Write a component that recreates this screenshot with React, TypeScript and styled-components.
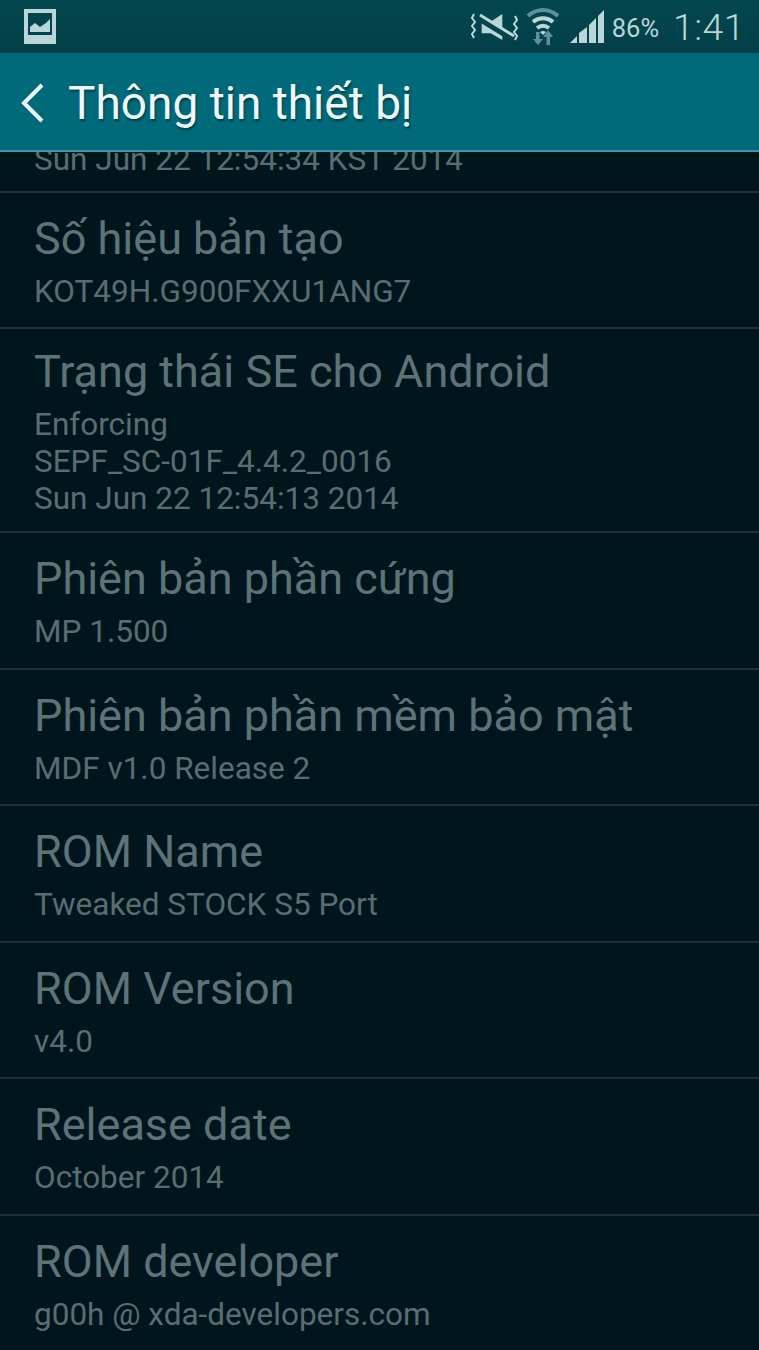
import React from 'react';
import styled, { createGlobalStyle } from 'styled-components';

const GlobalStyle = createGlobalStyle`
    html, body {
        margin: 0;
        padding: 0;
        background: #01161c;
    }
`;

const Screen = styled.div`
    width: 759px;
    height: 1350px;
    overflow: hidden;
    display: flex;
    flex-direction: column;
    background: #01161c;
    font-family: Roboto, "Noto Sans", sans-serif;
`;

const StatusBar = styled.div`
    height: 53px;
    flex: none;
    display: flex;
    align-items: center;
    box-sizing: border-box;
    padding: 0 14px 0 24px;
    background: linear-gradient(#04474f, #033f49);
    color: #b9d6d8;
`;

const StatusIcons = styled.div`
    margin-left: auto;
    display: flex;
    align-items: center;
`;

const WifiSlot = styled.span`
    display: flex;
    margin: 0 10px 0 6px;
`;

const Battery = styled.span`
    font-size: 25.5px;
    margin: 3px 14px 0 8px;
`;

const Clock = styled.span`
    font-size: 37.5px;
    font-weight: 300;
    letter-spacing: 0.4px;
`;

const Header = styled.div`
    height: 99px;
    flex: none;
    display: flex;
    align-items: center;
    padding: 3px 0 0 20px;
    box-sizing: border-box;
    background: #006a7a;
    border-bottom: 2px solid #3f97a3;
`;

const HeaderTitle = styled.h1`
    margin: 0 0 0 23px;
    font-size: 46px;
    font-weight: 400;
    color: #eef8f8;
    text-shadow: 1px 2px 2px rgba(0, 30, 40, 0.6);
`;

const List = styled.div`
    flex: 1;
    display: flex;
    flex-direction: column;
`;

const ClippedRow = styled.div`
    height: 40.5px;
    flex: none;
    box-sizing: border-box;
    overflow: hidden;
    display: flex;
    flex-direction: column;
    justify-content: flex-end;
    padding: 0 34px 13px;
    border-bottom: 2px solid #17323b;
`;

const Row = styled.div`
    flex: none;
    min-height: 136.5px;
    box-sizing: border-box;
    display: flex;
    flex-direction: column;
    justify-content: center;
    padding: 17px 34px 14px;
    border-bottom: 2px solid #17323b;
`;

const Title = styled.div`
    font-size: 45px;
    line-height: 52px;
    color: #5c7478;
`;

const Value = styled.div`
    font-size: 31.5px;
    line-height: 37px;
    color: #586e72;
    margin-top: 8px;
`;

const GalleryIcon = () => (
    <svg width="32" height="35" viewBox="0 0 32 35">
        <path fill="#b9d6d8" fillRule="evenodd" d="M0 0h32v35H0zM4 4v22h24V4z" />
        <path fill="#b9d6d8" d="M6 23v-5l5-4 5 4 6-4 4-4v13z" />
    </svg>
);

const MuteIcon = () => (
    <svg width="50" height="30" viewBox="0 0 50 30" fill="none" stroke="#b9d6d8">
        <path fill="#b9d6d8" stroke="none" d="M11.700 9.700h9L32.300 2v26l-11.600-6.700h-9z" />
        <path stroke="#04454d" strokeWidth="6" d="M10 7l34 21" />
        <path strokeWidth="3" d="M10 3l34 21" />
        <path strokeWidth="2" d="M4 2L2 6l3 4-3 4 3 4-3 4 2 4" />
        <path strokeWidth="2" d="M45 4l2 4-3 4 3 4-3 4 3 4-2 4" />
    </svg>
);

const WifiIcon = () => (
    <svg width="34" height="38" viewBox="0 0 34 38" fill="none">
        <path stroke="#5f9298" strokeWidth="4" d="M2 8c9-8 21-8 30 0" />
        <path stroke="#b9d6d8" strokeWidth="4" d="M7 14c6-5 14-5 20 0" />
        <path stroke="#b9d6d8" strokeWidth="4" d="M11 20c4-3 8-3 12 0" />
        <path fill="#b9d6d8" d="M14 24c2-1.500 4-1.500 6 0l-3 3z" />
        <path fill="#5f9298" d="M10 24h3.500v7H17l-5 6-5-6h3z" />
        <path fill="#5f9298" d="M24 37h-3.500v-8H17l5-7 5 7h-3z" />
    </svg>
);

const SignalIcon = () => (
    <svg width="34" height="33" viewBox="0 0 34 33" fill="#b9d6d8">
        <path d="M0 33l7-7v7z" />
        <path d="M9 33v-10l8-6v16z" />
        <path d="M19 33V15l7-7v25z" />
        <path d="M28 33V6l6-6v33z" />
    </svg>
);

const BackIcon = () => (
    <svg width="25" height="40" viewBox="0 0 25 40" fill="none">
        <path stroke="#eef8f8" strokeWidth="4" d="M22 2L4 20l18 18" />
    </svg>
);

const rows = [
    { title: 'Số hiệu bản tạo', values: ['KOT49H.G900FXXU1ANG7'] },
    {
        title: 'Trạng thái SE cho Android',
        values: ['Enforcing', 'SEPF_SC-01F_4.4.2_0016', 'Sun Jun 22 12:54:13 2014'],
    },
    { title: 'Phiên bản phần cứng', values: ['MP 1.500'] },
    { title: 'Phiên bản phần mềm bảo mật', values: ['MDF v1.0 Release 2'] },
    { title: 'ROM Name', values: ['Tweaked STOCK S5 Port'] },
    { title: 'ROM Version', values: ['v4.0'] },
    { title: 'Release date', values: ['October 2014'] },
    { title: 'ROM developer', values: ['g00h @ xda-developers.com'] },
];

export default function App() {
    const rowList = rows.map((row) => {
        return (
            <Row key={row.title}>
                <Title>{row.title}</Title>
                <Value>
                    {row.values.map((value) => (
                        <div key={value}>{value}</div>
                    ))}
                </Value>
            </Row>
        );
    });

    return (
        <Screen>
            <GlobalStyle />
            <StatusBar>
                <GalleryIcon />
                <StatusIcons>
                    <MuteIcon />
                    <WifiSlot>
                        <WifiIcon />
                    </WifiSlot>
                    <SignalIcon />
                    <Battery>86%</Battery>
                    <Clock>1:41</Clock>
                </StatusIcons>
            </StatusBar>
            <Header>
                <BackIcon />
                <HeaderTitle>Thông tin thiết bị</HeaderTitle>
            </Header>
            <List>
                <ClippedRow>
                    <Value>Sun Jun 22 12:54:34 KST 2014</Value>
                </ClippedRow>
                {rowList}
            </List>
        </Screen>
    );
}
